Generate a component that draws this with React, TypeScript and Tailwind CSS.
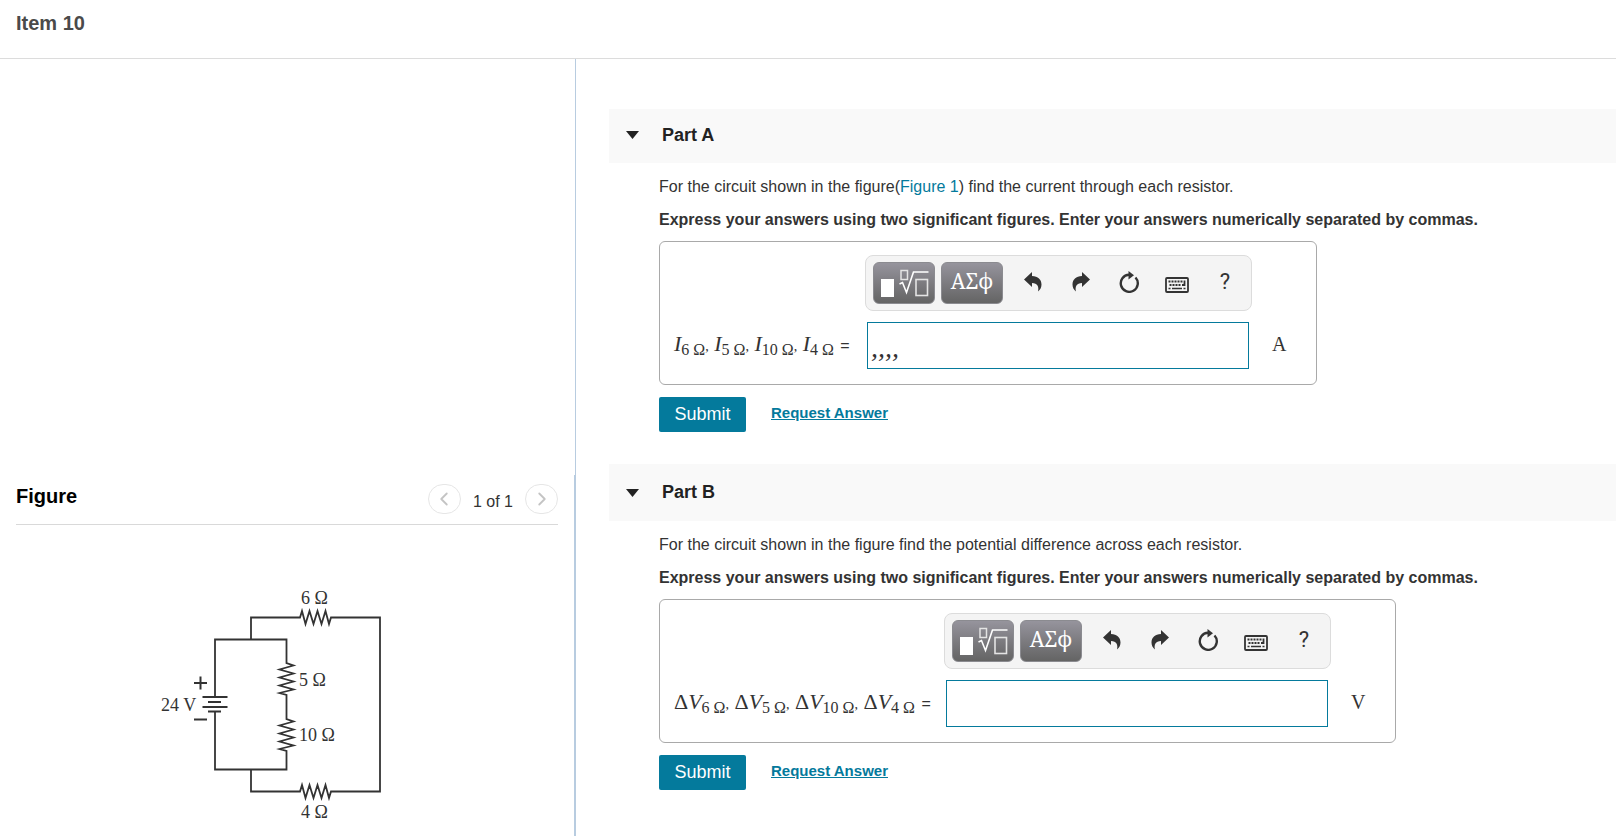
import React, { useState } from "react";
import { ChevronLeft, ChevronRight } from "lucide-react";

type Term = { prefix?: string; symbol: string; sub: string };

type PartProps = {
  id: string;
  title: string;
  question: React.ReactNode;
  terms: Term[];
  unit: string;
  initialValue: string;
  headerClass: string;
  labelClass: string;
};

const iconButton = "flex h-10 w-12 items-center justify-center text-[#333]";
const paletteButton =
  "flex h-[42px] w-[62px] items-center justify-center rounded-md border border-[#8b8b90] bg-linear-to-b from-[#96949d] to-[#646464] text-white";
const pagerButton =
  "flex h-[30px] w-[33px] items-center justify-center rounded-full border border-[#e6e6e6] text-[#c4c4c4]";

const TemplatesIcon = () => (
  <svg width="50" height="28" viewBox="0 0 50 28" fill="none" stroke="#e4e4e4">
    <rect x="2" y="10" width="13" height="18" fill="#fff" stroke="none" />
    <rect x="22" y="1.500" width="6.500" height="9" strokeWidth="1.500" />
    <path d="M20.500 15l3-1.500 4 10 7-20.500h15" stroke="#fff" strokeWidth="1.600" />
    <rect x="37" y="10.500" width="11.500" height="16" strokeWidth="1.600" />
  </svg>
);

const UndoIcon = () => (
  <svg width="18" height="20" viewBox="0 0 18 20" fill="currentColor">
    <path d="M0 7.500 8 0v4c6 .3 9.500 3.500 9.500 8.500 0 3-1.200 5-3.500 7 1.200-5-.5-8-6-8.500v4z" />
  </svg>
);

const RedoIcon = () => (
  <svg width="18" height="20" viewBox="0 0 18 20" fill="currentColor">
    <path d="M18 7.500 10 0v4C4 4.300.5 7.500.5 12.500c0 3 1.200 5 3.500 7-1.200-5 .5-8 6-8.500v4z" />
  </svg>
);

const ResetIcon = () => (
  <svg width="20" height="22" viewBox="0 0 20 22">
    <path d="M16.500 6.500A8.500 8.500 0 1 1 10 3.800" fill="none" stroke="currentColor" strokeWidth="2.400" />
    <path d="M9.500 0l5.500 4.300-5.500 4.200z" fill="currentColor" />
  </svg>
);

const KeyboardIcon = () => (
  <svg width="24" height="16" viewBox="0 0 24 16" fill="none" stroke="currentColor">
    <rect x="1" y="1" width="22" height="14" rx="1" strokeWidth="1.800" />
    <path d="M3.500 4.500h15M4.500 8h12" strokeWidth="1.800" strokeDasharray="2 1" />
    <path d="M19.500 3.500v4.500H17" strokeWidth="1.800" />
    <path d="M3.500 11.500h2M7 11.500h10M18.500 11.500h2" strokeWidth="1.600" />
  </svg>
);

const Toolbar: React.FC = () => (
  <div className="flex h-14 w-[387px] items-center rounded-lg border border-[#dcdcdc] bg-[#f4f4f4] pl-[7px]">
    <button className={paletteButton} aria-label="Templates">
      <TemplatesIcon />
    </button>
    <button className={`${paletteButton} ml-1.5 pb-1 font-['Noto_Serif','DejaVu_Serif',serif] text-[21px]`}>
      ΑΣϕ
    </button>
    <div className="ml-1.5 flex pb-0.5">
      <button className={iconButton} aria-label="Undo">
        <UndoIcon />
      </button>
      <button className={iconButton} aria-label="Redo">
        <RedoIcon />
      </button>
      <button className={iconButton} aria-label="Reset">
        <ResetIcon />
      </button>
      <button className={`${iconButton} pt-1.5`} aria-label="Keyboard shortcuts">
        <KeyboardIcon />
      </button>
      <button className={`${iconButton} font-[Roboto,sans-serif] text-[22px]`}>?</button>
    </div>
  </div>
);

const Terms: React.FC<{ terms: Term[] }> = ({ terms }) => (
  <>
    {terms.map((term, i) => (
      <React.Fragment key={term.sub}>
        {i > 0 && <span className="mr-0.5 text-[14px]">, </span>}
        {term.prefix}
        <i>{term.symbol}</i>
        <sub className="bottom-[-4px] text-[16px]">{term.sub}&nbsp;Ω</sub>
      </React.Fragment>
    ))}
    <span className="ml-0.5 font-['Liberation_Sans',sans-serif] text-[16px]"> =</span>
  </>
);

const Part: React.FC<PartProps> = ({
  id,
  title,
  question,
  terms,
  unit,
  initialValue,
  headerClass,
  labelClass,
}) => {
  const [open, setOpen] = useState(true);
  const [value, setValue] = useState(initialValue);

  return (
    <section>
      <h2 className={`flex items-center bg-[#f9f9f9] ${headerClass}`}>
        <button
          className="flex items-center gap-[23px] pl-[17px] text-[18px] font-bold text-[#222]"
          onClick={() => setOpen(!open)}
        >
          <svg width="13" height="8" viewBox="0 0 13 8" fill="currentColor">
            <path d="M0 0h13L6.500 8z" />
          </svg>
          {title}
        </button>
      </h2>
      {open && (
        <div className="pl-[50px] pt-[14px] text-[16px] leading-5 text-[#333]">
          <p>{question}</p>
          <p className="mt-[13px] font-bold">
            Express your answers using two significant figures. Enter your answers numerically separated by commas.
          </p>
          <div className="mt-[11px] flex">
            <div className="flex rounded-md border border-[#a9a9a9] pb-[15px] pr-[30px] pt-[13px]">
              <label
                htmlFor={id}
                className={`mt-[77px] whitespace-nowrap pl-[14px] font-['Liberation_Serif',serif] text-[22px] leading-6 ${labelClass}`}
              >
                <Terms terms={terms} />
              </label>
              <div>
                <Toolbar />
                <input
                  id={id}
                  value={value}
                  onChange={(e) => setValue(e.target.value)}
                  className="ml-0.5 mt-[11px] block h-[47px] w-[382px] border border-[#047a9c] px-[3px] pt-1 font-['Liberation_Serif',serif] text-[28px] italic outline-none"
                />
              </div>
              <span className="ml-5 mt-[77px] font-['Liberation_Serif',serif] text-[20px] leading-6">{unit}</span>
            </div>
          </div>
          <div className="mt-3 flex items-center gap-[25px]">
            <button className="h-[35px] w-[87px] rounded-xs bg-[#047a9c] pb-0.5 text-[18px] text-white">Submit</button>
            <a href="#" className="pb-1 text-[15px] font-bold text-[#047a9c] underline">
              Request Answer
            </a>
          </div>
        </div>
      )}
    </section>
  );
};

const Circuit: React.FC = () => (
  <svg width="260" height="260" viewBox="0 0 260 260" className="ml-[140px]">
    <g fill="none" stroke="#333" strokeWidth="1.800" strokeLinejoin="miter">
      <path d="M111 69.500V47.500H160l2-6.500 3.500 13 4-13 4 13 4-13 4 13 4-13 3.500 13 2-6.500H240V221.500H191l-2 6.500-3.500-13-4 13-4-13-4 13-4-13-4 13-3.500-13-2 6.500H111V199.500" />
      <path d="M75 127V69.500H146.500V93l7 2.500-14 4 14 4-14 4 14 4-14 4 14 4-14 3.500 7 2V149l7 2.500-14 4 14 4-14 4 14 4-14 4 14 4-14 3.500 7 2V199.500H75V141.500" />
      <path d="M62.500 127h25M68 132h13M62.500 137h25M68 141.500h13" />
      <path d="M54 113h13M60.500 106.500v13M54 149.500h13" strokeWidth="2" />
    </g>
    <g fill="#333" fontFamily="Liberation Serif, serif" fontSize="18">
      <text x="161" y="34">6 Ω</text>
      <text x="159" y="116">5 Ω</text>
      <text x="159" y="171">10 Ω</text>
      <text x="161" y="248">4 Ω</text>
      <text x="21" y="141">24 V</text>
    </g>
  </svg>
);

const FigurePanel: React.FC = () => (
  <div className="border-r-2 border-[#b8cce0] pb-1.5">
    <div className="mx-4 flex h-[50px] items-center justify-between border-b border-[#d9d9d9]">
      <h2 className="pb-2 text-[20px] font-bold text-black">Figure</h2>
      <div className="flex items-center pb-0.5 text-[#333]">
        <button className={pagerButton} aria-label="Previous figure">
          <ChevronLeft size={22} />
        </button>
        <span className="px-3 pt-1.5 text-[16px]">1 of 1</span>
        <button className={pagerButton} aria-label="Next figure">
          <ChevronRight size={22} />
        </button>
      </div>
    </div>
    <div className="pt-[45px]">
      <Circuit />
    </div>
  </div>
);

const App: React.FC = () => {
  return (
    <div className="flex min-h-screen flex-col bg-white font-['Liberation_Sans',Arial,sans-serif]">
      <header className="border-b border-[#dcdcdc] px-4 pb-[21px] pt-[9px]">
        <h1 className="text-[20px] font-bold leading-7 text-[#4a4a4a]">Item 10</h1>
      </header>
      <div className="flex flex-1">
        <aside className="flex w-xl shrink-0 flex-col">
          <div className="flex-1 border-r border-[#b8cce0]" />
          <FigurePanel />
        </aside>
        <main className="flex min-w-0 flex-1 flex-col gap-8 pl-[33px] pt-[50px]">
          <Part
            id="part-a"
            title="Part A"
            question={
              <>
                For the circuit shown in the figure(
                <a href="#" className="text-[#047a9c]">
                  Figure 1
                </a>
                ) find the current through each resistor.
              </>
            }
            terms={[
              { symbol: "I", sub: "6" },
              { symbol: "I", sub: "5" },
              { symbol: "I", sub: "10" },
              { symbol: "I", sub: "4" },
            ]}
            unit="A"
            initialValue=",,,,"
            headerClass="h-[54px] pb-0.5"
            labelClass="w-[205px]"
          />
          <Part
            id="part-b"
            title="Part B"
            question="For the circuit shown in the figure find the potential difference across each resistor."
            terms={[
              { prefix: "Δ", symbol: "V", sub: "6" },
              { prefix: "Δ", symbol: "V", sub: "5" },
              { prefix: "Δ", symbol: "V", sub: "10" },
              { prefix: "Δ", symbol: "V", sub: "4" },
            ]}
            unit="V"
            initialValue=""
            headerClass="h-[57px]"
            labelClass="w-[284px]"
          />
        </main>
      </div>
    </div>
  );
};

export default App;
